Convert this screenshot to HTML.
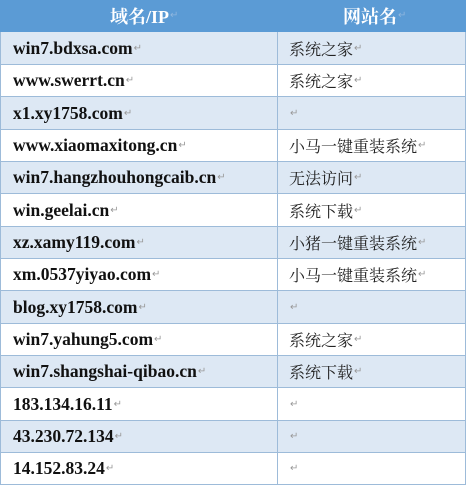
<!DOCTYPE html>
<html><head><meta charset="utf-8"><style>
body{margin:0;width:466px;height:482px;overflow:hidden;background:#fff;position:relative}
.r{position:absolute;left:0;width:466px;box-sizing:border-box;border-left:1px solid #9dbbd9;border-right:1px solid #9dbbd9;border-bottom:1px solid #9dbbd9}
.c1,.c2{position:absolute;top:0;bottom:0;display:flex;align-items:center}
.c1{left:12px;font:bold 17.5px "Liberation Serif",serif;color:#111}
.c2{left:276px;border-left:1px solid #9dbbd9;padding-left:11px;height:100%;font:16px "Noto Serif CJK SC","Liberation Serif",serif;color:#222}
.a{font:10px "Liberation Sans",sans-serif;color:#999;margin-left:1px}
.h{background:#5b9bd5;border-color:#5b9bd5}
.h .c1,.h .c2{font:bold 18px "Liberation Serif","Noto Serif CJK SC",serif;color:#fff;border-color:#5b9bd5}
.b{background:#dde8f4}
</style></head><body>
<div class="r h" style="top:0;height:32px"><div class="c1" style="left:109px">域名/IP<span class="a" style="color:#8fb6de">↵</span></div><div class="c2" style="left:276px;padding-left:66px;border:none">网站名<span class="a" style="color:#8fb6de">↵</span></div></div>
<div class="r b" style="top:32px;height:33px"><div class="c1">win7.bdxsa.com<span class="a">↵</span></div><div class="c2">系统之家<span class="a">↵</span></div></div>
<div class="r" style="top:65px;height:32px"><div class="c1">www.swerrt.cn<span class="a">↵</span></div><div class="c2">系统之家<span class="a">↵</span></div></div>
<div class="r b" style="top:97px;height:33px"><div class="c1">x1.xy1758.com<span class="a">↵</span></div><div class="c2"><span class="a">↵</span></div></div>
<div class="r" style="top:130px;height:32px"><div class="c1">www.xiaomaxitong.cn<span class="a">↵</span></div><div class="c2">小马一键重装系统<span class="a">↵</span></div></div>
<div class="r b" style="top:162px;height:32px"><div class="c1">win7.hangzhouhongcaib.cn<span class="a">↵</span></div><div class="c2">无法访问<span class="a">↵</span></div></div>
<div class="r" style="top:194px;height:33px"><div class="c1">win.geelai.cn<span class="a">↵</span></div><div class="c2">系统下载<span class="a">↵</span></div></div>
<div class="r b" style="top:227px;height:32px"><div class="c1">xz.xamy119.com<span class="a">↵</span></div><div class="c2">小猪一键重装系统<span class="a">↵</span></div></div>
<div class="r" style="top:259px;height:32px"><div class="c1">xm.0537yiyao.com<span class="a">↵</span></div><div class="c2">小马一键重装系统<span class="a">↵</span></div></div>
<div class="r b" style="top:291px;height:33px"><div class="c1">blog.xy1758.com<span class="a">↵</span></div><div class="c2"><span class="a">↵</span></div></div>
<div class="r" style="top:324px;height:32px"><div class="c1">win7.yahung5.com<span class="a">↵</span></div><div class="c2">系统之家<span class="a">↵</span></div></div>
<div class="r b" style="top:356px;height:32px"><div class="c1">win7.shangshai-qibao.cn<span class="a">↵</span></div><div class="c2">系统下载<span class="a">↵</span></div></div>
<div class="r" style="top:388px;height:33px"><div class="c1">183.134.16.11<span class="a">↵</span></div><div class="c2"><span class="a">↵</span></div></div>
<div class="r b" style="top:421px;height:32px"><div class="c1">43.230.72.134<span class="a">↵</span></div><div class="c2"><span class="a">↵</span></div></div>
<div class="r" style="top:453px;height:32px"><div class="c1">14.152.83.24<span class="a">↵</span></div><div class="c2"><span class="a">↵</span></div></div>
</body></html>
